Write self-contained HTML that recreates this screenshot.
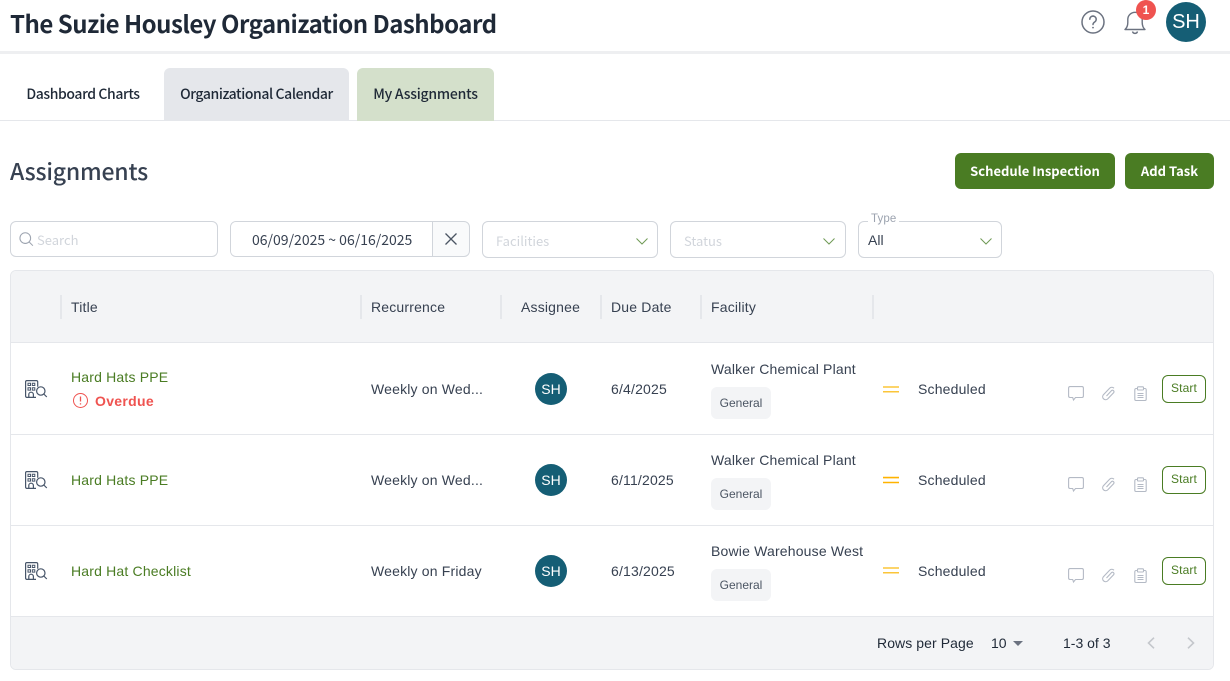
<!DOCTYPE html>
<html><head><meta charset="utf-8"><style>
*{box-sizing:border-box}
html,body{margin:0;padding:0;width:1230px;height:681px;overflow:hidden;background:#fff}
body{font-family:"Liberation Sans",sans-serif;font-size:14px;color:#374151;position:relative}
.a{position:absolute;white-space:nowrap}
.n{font-family:"Noto Sans CJK JP","Liberation Sans",sans-serif}
.box{position:absolute;border:1px solid #d1d5db;border-radius:6px;background:#fff}
.ph{color:#d1d5db}
.sep{position:absolute;width:2px;height:24px;top:295px;background:#e5e7eb}
.t{line-height:16px;letter-spacing:.18px}
.av{position:absolute;width:32px;height:32px;border-radius:50%;background:#155e75;color:#fff;text-align:center;line-height:32px;font-size:14px}
.tag{position:absolute;left:711px;width:60px;height:32px;background:#f3f4f6;border-radius:6px;font-size:12px;line-height:32px;text-align:center;color:#4b5563}
.start{position:absolute;left:1162px;width:44px;height:28px;border:1px solid #4a7c23;border-radius:6px;color:#4a7c23;font-size:12px;line-height:24px;text-align:center;letter-spacing:.15px}
.g{color:#4a7c23}
.rowline{position:absolute;left:11px;width:1202px;height:1px;background:#e5e7eb}
.tab{height:53px;line-height:53px;text-align:center;font-size:14px;font-weight:500;color:#1f2937;letter-spacing:-.4px}
.btn{top:153px;height:36px;line-height:36px;background:#4a7c23;color:#fff;border-radius:6px;text-align:center;font-size:13px;font-weight:700}
svg{position:absolute;overflow:visible}
</style></head><body>
<div class="a" style="left:0;top:51px;width:1230px;height:3px;background:#eeeff1"></div>
<div class="a n" style="left:10px;top:7px;font-size:24px;line-height:32px;font-weight:700;color:#1f2937;letter-spacing:-.5px">The Suzie Housley Organization Dashboard</div>

<svg style="left:1081px;top:10px" width="24" height="24" viewBox="0 0 24 24" fill="none" stroke="#6b7280" stroke-width="1.5"><circle cx="12" cy="12" r="11"/><path d="M8.800 9.300a3.200 3.200 0 1 1 4.900 2.700c-1.100.7-1.700 1.300-1.700 2.500" stroke-linecap="round"/><circle cx="12" cy="17.600" r=".9" fill="#6b7280" stroke="none"/></svg>
<svg style="left:1124px;top:10px" width="22" height="24" viewBox="0 0 22 24" fill="none" stroke="#6b7280" stroke-width="1.4" stroke-linejoin="round"><path d="M1 19.500h20c-2-1.800-2.800-3.600-2.800-7V9.500a7.200 7.200 0 0 0-14.400 0v3c0 3.400-.8 5.200-2.800 7z"/><path d="M8.500 21.500a2.600 2.600 0 0 0 5 0"/></svg>
<div class="a" style="left:1136px;top:0;width:20px;height:20px;border-radius:50%;background:#ef5350;color:#fff;font-size:12px;font-weight:700;line-height:20px;text-align:center">1</div>
<div class="a" style="left:1166px;top:2px;width:40px;height:40px;border-radius:50%;background:#155e75;color:#fff;font-size:20px;line-height:40px;text-align:center">SH</div>

<div class="a" style="left:0;top:120px;width:1230px;height:1px;background:#e5e7eb"></div>
<div class="a n tab" style="left:10px;top:68px;width:146px">Dashboard Charts</div>
<div class="a n tab" style="left:164px;top:68px;width:185px;background:#e5e7eb;border-radius:6px 6px 0 0">Organizational Calendar</div>
<div class="a n tab" style="left:357px;top:68px;width:137px;background:#d4e0cb;border-radius:6px 6px 0 0;letter-spacing:-.22px">My Assignments</div>

<div class="a n" style="left:10px;top:153px;font-size:23px;line-height:34px;font-weight:500;color:#374151;letter-spacing:-.2px">Assignments</div>
<div class="a n btn" style="left:955px;width:160px">Schedule Inspection</div>
<div class="a n btn" style="left:1125px;width:89px">Add Task</div>

<div class="box" style="left:10px;top:221px;width:208px;height:36px"></div>
<svg style="left:19px;top:232px" width="15" height="15" viewBox="0 0 16 16" fill="none" stroke="#9ca3af" stroke-width="1.1"><circle cx="6.700" cy="6.500" r="5.700"/><path d="M11 10.800l3.800 3.800"/></svg>
<div class="a n ph" style="left:37px;top:231px;font-size:13px;line-height:18px">Search</div>

<div class="box" style="left:230px;top:221px;width:240px;height:36px;background:#f9fafb"></div>
<div class="a" style="left:231px;top:222px;width:202px;height:34px;background:#fff;border-right:1px solid #d1d5db;border-radius:5px 0 0 5px"></div>
<div class="a n" style="left:252px;top:231px;font-size:14px;line-height:18px;color:#374151">06/09/2025 ~ 06/16/2025</div>
<svg style="left:445px;top:233px" width="12" height="12" viewBox="0 0 12 12" fill="none" stroke="#4b5563" stroke-width="1.300"><path d="M.5.5l11 11M11.500.5l-11 11"/></svg>

<div class="box" style="left:482px;top:221px;width:176px;height:37px"></div>
<div class="a n ph" style="left:496px;top:232px;font-size:13px;line-height:18px">Facilities</div>
<svg style="left:636px;top:238px" width="12" height="7" viewBox="0 0 12 7" fill="none" stroke="#6f9a55" stroke-width="1"><path d="M.5.5l5.500 5.500L11.500.5"/></svg>

<div class="box" style="left:670px;top:221px;width:176px;height:37px"></div>
<div class="a n ph" style="left:684px;top:232px;font-size:13px;line-height:18px">Status</div>
<svg style="left:823px;top:238px" width="12" height="7" viewBox="0 0 12 7" fill="none" stroke="#6f9a55" stroke-width="1"><path d="M.5.5l5.500 5.500L11.500.5"/></svg>

<div class="box" style="left:858px;top:221px;width:144px;height:37px"></div>
<div class="a" style="left:868px;top:212px;padding:0 3px;background:#fff;font-size:11.500px;line-height:14px;color:#9ca3af;letter-spacing:.1px">Type</div>
<div class="a" style="left:868px;top:232px;font-size:14px;line-height:16px;color:#374151">All</div>
<svg style="left:980px;top:238px" width="12" height="7" viewBox="0 0 12 7" fill="none" stroke="#6f9a55" stroke-width="1"><path d="M.5.5l5.500 5.500L11.500.5"/></svg>

<div class="a" style="left:10px;top:270px;width:1204px;height:400px;border:1px solid #e5e7eb;border-radius:6px;background:#fff"></div>
<div class="a" style="left:11px;top:271px;width:1202px;height:72px;background:#f3f4f6;border-radius:5px 5px 0 0"></div>
<div class="a" style="left:11px;top:616px;width:1202px;height:53px;background:#f3f4f6;border-top:1px solid #e5e7eb;border-radius:0 0 5px 5px"></div>
<div class="rowline" style="top:342px"></div>
<div class="rowline" style="top:434px"></div>
<div class="rowline" style="top:525px"></div>

<div class="sep" style="left:60px"></div>
<div class="sep" style="left:360px"></div>
<div class="sep" style="left:500px"></div>
<div class="sep" style="left:600px"></div>
<div class="sep" style="left:700px"></div>
<div class="sep" style="left:872px"></div>
<div class="a t" style="left:71px;top:299px">Title</div>
<div class="a t" style="left:371px;top:299px">Recurrence</div>
<div class="a t" style="left:521px;top:299px">Assignee</div>
<div class="a t" style="left:611px;top:299px">Due Date</div>
<div class="a t" style="left:711px;top:299px">Facility</div>

<!-- row 1 -->
<svg style="left:25px;top:380px" width="22" height="18" viewBox="0 0 22 18" fill="none" stroke="#475569" stroke-width="1.200"><path d="M11 17.400H1.800A1.300 1.300 0 0 1 .6 16V1.800A1.300 1.300 0 0 1 1.800.6h9.600a1.300 1.300 0 0 1 1.300 1.200v5"/><path d="M3 3.200h2.500v2.300H3zM7.300 3.200h2.500v2.300H7.300zM3 7.800h2.500v2.300H3zM7.300 7.800h2.500v2.300H7.300z" stroke-width="1"/><path d="M3.800 17.400v-2.900a2.300 2.300 0 0 1 4.600 0v2.900"/><circle cx="15.800" cy="11" r="4.200"/><path d="M18.800 14l3 3"/></svg>
<div class="a t g" style="left:71px;top:369px">Hard Hats PPE</div>
<svg style="left:73px;top:393px" width="15" height="15" viewBox="0 0 15 15" fill="none" stroke="#ef5350" stroke-width="1"><circle cx="7.500" cy="7.500" r="7"/><path d="M7.500 3.500v5M7.500 10.300v1.200" stroke-width="1.300"/></svg>
<div class="a t" style="left:95px;top:393px;color:#ef5350;font-weight:700;letter-spacing:.3px">Overdue</div>
<div class="a t" style="left:371px;top:381px">Weekly on Wed...</div>
<div class="av" style="left:535px;top:373px">SH</div>
<div class="a t" style="left:611px;top:381px">6/4/2025</div>
<div class="a t" style="left:711px;top:361px">Walker Chemical Plant</div>
<div class="tag" style="top:387px">General</div>
<svg style="left:883px;top:380px" width="16" height="16" fill="none" stroke="#fbbf24" stroke-width="1.500"><path d="M0 7h16M0 11.800h16" opacity=".9"/></svg>
<div class="a t" style="left:918px;top:381px">Scheduled</div>
<svg style="left:1068px;top:386px" width="16" height="15" viewBox="0 0 16 15" fill="none" stroke="#b4bac5" stroke-width="1.100"><path d="M2 .6h12A1.500 1.500 0 0 1 15.400 2v8a1.500 1.500 0 0 1-1.400 1.500H7.500L5.500 14l-.8-2.500H2A1.500 1.500 0 0 1 .6 10V2A1.500 1.500 0 0 1 2 .6z"/></svg>
<svg style="left:1102px;top:386px" width="13" height="15" viewBox="0 0 13 15" fill="none" stroke="#b4bac5" stroke-width="1.100"><path d="M4.500 10L9.500 4.600a1.500 1.500 0 0 1 2.200 2L5.600 13a3 3 0 0 1-4.400-4L7.600 2.200a3 3 0 0 1 4.400 0"/></svg>
<svg style="left:1134px;top:386px" width="13" height="15" viewBox="0 0 13 15" fill="none" stroke="#b4bac5" stroke-width="1.100"><path d="M3.500 2.500H2A1.200 1.200 0 0 0 .8 3.700v9.600A1.200 1.200 0 0 0 2 14.500h9a1.200 1.200 0 0 0 1.200-1.200V3.700A1.200 1.200 0 0 0 11 2.500H9.500"/><rect x="3.500" y=".8" width="6" height="3.200" rx=".8"/><path d="M3.500 7.500h6M3.500 9.500h6M3.500 11.500h6" stroke-width="1"/></svg>
<div class="start" style="top:375px">Start</div>

<!-- row 2 -->
<svg style="left:25px;top:471px" width="22" height="18" viewBox="0 0 22 18" fill="none" stroke="#475569" stroke-width="1.200"><path d="M11 17.400H1.800A1.300 1.300 0 0 1 .6 16V1.800A1.300 1.300 0 0 1 1.800.6h9.600a1.300 1.300 0 0 1 1.300 1.200v5"/><path d="M3 3.200h2.500v2.300H3zM7.300 3.200h2.500v2.300H7.300zM3 7.800h2.500v2.300H3zM7.300 7.800h2.500v2.300H7.300z" stroke-width="1"/><path d="M3.800 17.400v-2.900a2.300 2.300 0 0 1 4.600 0v2.900"/><circle cx="15.800" cy="11" r="4.200"/><path d="M18.800 14l3 3"/></svg>
<div class="a t g" style="left:71px;top:472px">Hard Hats PPE</div>
<div class="a t" style="left:371px;top:472px">Weekly on Wed...</div>
<div class="av" style="left:535px;top:464px">SH</div>
<div class="a t" style="left:611px;top:472px">6/11/2025</div>
<div class="a t" style="left:711px;top:452px">Walker Chemical Plant</div>
<div class="tag" style="top:478px">General</div>
<svg style="left:883px;top:470px" width="16" height="16" fill="none" stroke="#ffb300" stroke-width="1.600"><path d="M0 7.600h16M0 12.500h16"/></svg>
<div class="a t" style="left:918px;top:472px">Scheduled</div>
<svg style="left:1068px;top:477px" width="16" height="15" viewBox="0 0 16 15" fill="none" stroke="#b4bac5" stroke-width="1.100"><path d="M2 .6h12A1.500 1.500 0 0 1 15.400 2v8a1.500 1.500 0 0 1-1.400 1.500H7.500L5.500 14l-.8-2.500H2A1.500 1.500 0 0 1 .6 10V2A1.500 1.500 0 0 1 2 .6z"/></svg>
<svg style="left:1102px;top:477px" width="13" height="15" viewBox="0 0 13 15" fill="none" stroke="#b4bac5" stroke-width="1.100"><path d="M4.500 10L9.500 4.600a1.500 1.500 0 0 1 2.200 2L5.600 13a3 3 0 0 1-4.400-4L7.600 2.200a3 3 0 0 1 4.400 0"/></svg>
<svg style="left:1134px;top:477px" width="13" height="15" viewBox="0 0 13 15" fill="none" stroke="#b4bac5" stroke-width="1.100"><path d="M3.500 2.500H2A1.200 1.200 0 0 0 .8 3.700v9.600A1.200 1.200 0 0 0 2 14.500h9a1.200 1.200 0 0 0 1.200-1.200V3.700A1.200 1.200 0 0 0 11 2.500H9.500"/><rect x="3.500" y=".8" width="6" height="3.200" rx=".8"/><path d="M3.500 7.500h6M3.500 9.500h6M3.500 11.500h6" stroke-width="1"/></svg>
<div class="start" style="top:466px">Start</div>

<!-- row 3 -->
<svg style="left:25px;top:562px" width="22" height="18" viewBox="0 0 22 18" fill="none" stroke="#475569" stroke-width="1.200"><path d="M11 17.400H1.800A1.300 1.300 0 0 1 .6 16V1.800A1.300 1.300 0 0 1 1.800.6h9.600a1.300 1.300 0 0 1 1.300 1.200v5"/><path d="M3 3.200h2.500v2.300H3zM7.300 3.200h2.500v2.300H7.300zM3 7.800h2.500v2.300H3zM7.300 7.800h2.500v2.300H7.300z" stroke-width="1"/><path d="M3.800 17.400v-2.900a2.300 2.300 0 0 1 4.600 0v2.900"/><circle cx="15.800" cy="11" r="4.200"/><path d="M18.800 14l3 3"/></svg>
<div class="a t g" style="left:71px;top:563px">Hard Hat Checklist</div>
<div class="a t" style="left:371px;top:563px">Weekly on Friday</div>
<div class="av" style="left:535px;top:555px">SH</div>
<div class="a t" style="left:611px;top:563px">6/13/2025</div>
<div class="a t" style="left:711px;top:543px">Bowie Warehouse West</div>
<div class="tag" style="top:569px">General</div>
<svg style="left:883px;top:561px" width="16" height="16" fill="none" stroke="#fbbf24" stroke-width="1.500"><path d="M0 7h16M0 11.800h16" opacity=".9"/></svg>
<div class="a t" style="left:918px;top:563px">Scheduled</div>
<svg style="left:1068px;top:568px" width="16" height="15" viewBox="0 0 16 15" fill="none" stroke="#b4bac5" stroke-width="1.100"><path d="M2 .6h12A1.500 1.500 0 0 1 15.400 2v8a1.500 1.500 0 0 1-1.400 1.500H7.500L5.500 14l-.8-2.500H2A1.500 1.500 0 0 1 .6 10V2A1.500 1.500 0 0 1 2 .6z"/></svg>
<svg style="left:1102px;top:568px" width="13" height="15" viewBox="0 0 13 15" fill="none" stroke="#b4bac5" stroke-width="1.100"><path d="M4.500 10L9.500 4.600a1.500 1.500 0 0 1 2.200 2L5.600 13a3 3 0 0 1-4.400-4L7.600 2.200a3 3 0 0 1 4.400 0"/></svg>
<svg style="left:1134px;top:568px" width="13" height="15" viewBox="0 0 13 15" fill="none" stroke="#b4bac5" stroke-width="1.100"><path d="M3.500 2.500H2A1.200 1.200 0 0 0 .8 3.700v9.600A1.200 1.200 0 0 0 2 14.500h9a1.200 1.200 0 0 0 1.200-1.200V3.700A1.200 1.200 0 0 0 11 2.500H9.500"/><rect x="3.500" y=".8" width="6" height="3.200" rx=".8"/><path d="M3.500 7.500h6M3.500 9.500h6M3.500 11.500h6" stroke-width="1"/></svg>
<div class="start" style="top:557px">Start</div>

<!-- footer -->
<div class="a t" style="left:877px;top:635px;color:#1f2937;letter-spacing:.08px">Rows per Page</div>
<div class="a t" style="left:991px;top:635px;color:#1f2937;letter-spacing:0">10</div>
<svg style="left:1013px;top:641px" width="10" height="5" viewBox="0 0 10 5"><path d="M0 0h10L5 5z" fill="#6b7280"/></svg>
<div class="a t" style="left:1063px;top:635px;color:#1f2937;letter-spacing:0">1-3 of 3</div>
<svg style="left:1146px;top:637px" width="10" height="12" viewBox="0 0 10 12" fill="none" stroke="#c4c7cc" stroke-width="1.600"><path d="M8 .7L2.500 6 8 11.300"/></svg>
<svg style="left:1186px;top:637px" width="10" height="12" viewBox="0 0 10 12" fill="none" stroke="#c4c7cc" stroke-width="1.600"><path d="M2 .7L7.500 6 2 11.300"/></svg>
</body></html>
